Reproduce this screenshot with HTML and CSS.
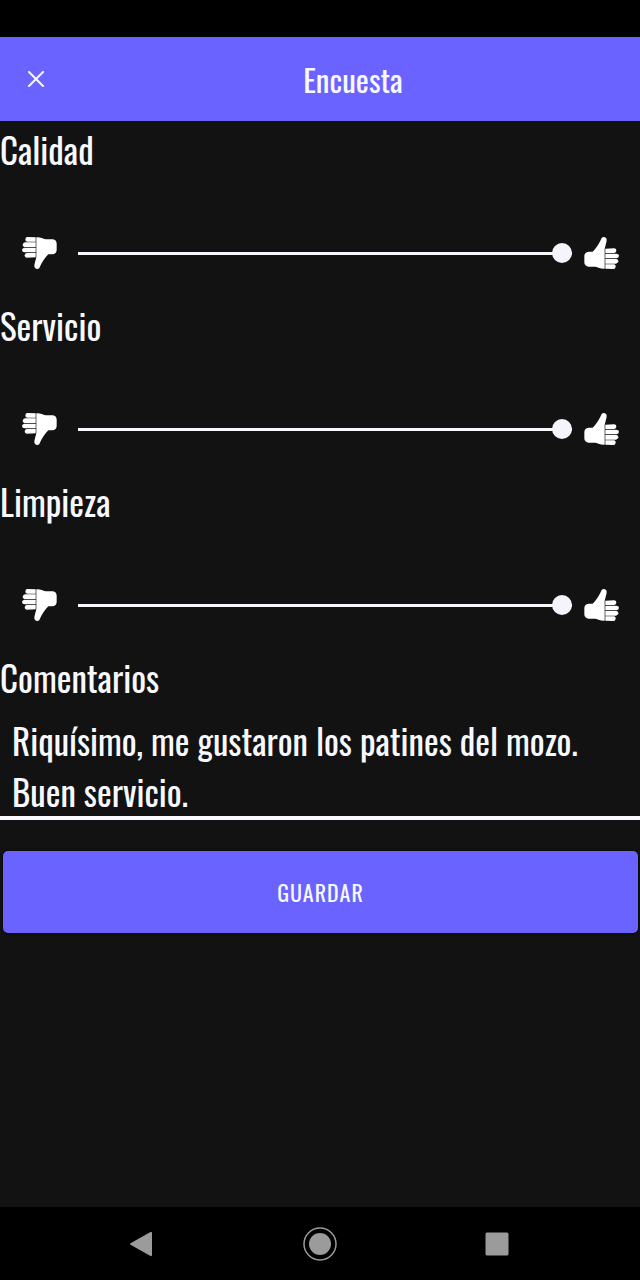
FILE: index.html
```html
<!DOCTYPE html>
<html lang="es">
<head>
<meta charset="utf-8">
<meta name="viewport" content="width=device-width, initial-scale=1">
<title>Encuesta</title>
<link rel="stylesheet" href="styles.css">
</head>
<body>
<svg class="sprite" aria-hidden="true">
  <symbol id="thumb" viewBox="0 0 108 102">
    <path d="M53 6C57 1 68 3 68 11C68 20 63 31 62 40V98C50 99 43 94 34 92H13C4 91 1 85 1 78V61C1 52 6 48 14 47H26C36 38 46 22 53 6Z"/>
    <path d="M64 38L91 37Q98 38 97 45Q96 50 91 51H64Z"/>
    <path d="M64 53H98Q105 54 105 60Q104 66 98 67H64Z"/>
    <path d="M64 69H97Q104 70 103 76Q102 82 96 83H64Z"/>
    <path d="M64 85H90Q96 86 95 92Q94 99 89 99L64 98Z"/>
  </symbol>
</svg>
<div class="screen">
  <div class="status"></div>
  <header class="bar">
    <button class="close" type="button" aria-label="Cerrar">
      <svg class="cross" viewBox="0 0 16 16"><path d="M1 1L15 15M15 1L1 15"/></svg>
    </button>
    <h1 class="title">Encuesta</h1>
  </header>
  <form class="survey">
    <div class="question">
      <label class="label" for="calidad">Calidad</label>
      <div class="rating">
        <svg class="thumb down"><use href="#thumb"/></svg>
        <input class="range" id="calidad" type="range" min="0" max="10" value="10">
        <svg class="thumb"><use href="#thumb"/></svg>
      </div>
    </div>
    <div class="question">
      <label class="label" for="servicio">Servicio</label>
      <div class="rating">
        <svg class="thumb down"><use href="#thumb"/></svg>
        <input class="range" id="servicio" type="range" min="0" max="10" value="10">
        <svg class="thumb"><use href="#thumb"/></svg>
      </div>
    </div>
    <div class="question">
      <label class="label" for="limpieza">Limpieza</label>
      <div class="rating">
        <svg class="thumb down"><use href="#thumb"/></svg>
        <input class="range" id="limpieza" type="range" min="0" max="10" value="10">
        <svg class="thumb"><use href="#thumb"/></svg>
      </div>
    </div>
    <label class="label" for="comentarios">Comentarios</label>
    <textarea class="comments" id="comentarios" rows="2">Riquísimo, me gustaron los patines del mozo.
Buen servicio.</textarea>
    <button class="save" type="button">GUARDAR</button>
  </form>
  <nav class="system">
    <button class="key" type="button" aria-label="Atrás">
      <svg class="glyph" viewBox="0 0 34 34"><path d="M4.500 16.200L24.500 5Q26 4.500 26 6V28Q26 29.500 24.500 29L4.500 17.800Q3.500 17 4.500 16.200Z"/></svg>
    </button>
    <button class="key" type="button" aria-label="Inicio">
      <svg class="glyph" viewBox="0 0 34 34"><circle class="ring" cx="17" cy="17" r="16"/><circle cx="17" cy="17" r="11"/></svg>
    </button>
    <button class="key" type="button" aria-label="Recientes">
      <svg class="glyph" viewBox="0 0 34 34"><rect x="5.500" y="5.500" width="23" height="23" rx="1.500"/></svg>
    </button>
  </nav>
</div>
</body>
</html>
```
FILE: styles.css
```css
* { box-sizing: border-box; }
body {
  margin: 0;
  background: #121212;
  color: #f8f8ff;
  font-family: Oswald, "Liberation Sans Narrow", "Arial Narrow", sans-serif;
}
button, input, textarea {
  margin: 0;
  padding: 0;
  border: 0;
  color: inherit;
  font-family: inherit;
}
.sprite { position: absolute; width: 0; height: 0; }
.screen { display: flex; flex-direction: column; min-height: 100vh; }
.status { height: 37px; background: #000; }
.bar {
  display: flex;
  align-items: center;
  height: 84px;
  background: #6a63ff;
}
.close {
  display: flex;
  justify-content: center;
  align-items: center;
  width: 66px;
  height: 84px;
  padding-left: 6px;
  background: none;
}
.cross {
  width: 16px;
  height: 16px;
  fill: none;
  stroke: #f8f8ff;
  stroke-width: 2;
  stroke-linecap: round;
}
.title {
  flex: 1;
  margin: 0;
  font-size: 31px;
  font-weight: 400;
  line-height: 48px;
  text-align: center;
}
.survey { display: flex; flex-direction: column; flex: 1; }
.question { display: flex; flex-direction: column; height: 176px; }
.label { font-size: 35px; line-height: 56px; }
.rating {
  display: flex;
  align-items: center;
  flex: 1;
  padding: 32px 20px 0 21px;
}
.thumb { flex: none; width: 36px; height: 34px; fill: #fff; }
.down { transform: rotate(180deg); }
.range {
  flex: 1;
  min-width: 0;
  height: 20px;
  margin: 0 12px 0 21px;
  appearance: none;
  background: linear-gradient(#f8f8ff, #f8f8ff) center / 100% 3px no-repeat;
}
.range::-webkit-slider-thumb {
  appearance: none;
  width: 20px;
  height: 20px;
  border-radius: 50%;
  background: #f4f4fc;
}
.comments {
  display: block;
  width: 100%;
  height: 115px;
  padding: 10px 12px 0;
  border-bottom: 4px solid #f8f8ff;
  background: none;
  font-size: 35px;
  line-height: 51px;
  resize: none;
  overflow: hidden;
}
.save {
  height: 82px;
  margin: 31px 2px 0 3px;
  border-radius: 5px;
  background: #6a63ff;
  font-size: 22px;
  letter-spacing: 1px;
  box-shadow: 0 0 3px #000;
}
.system {
  display: flex;
  justify-content: center;
  align-items: center;
  height: 73px;
  background: #000;
}
.key { display: flex; justify-content: center; width: 177px; background: none; }
.glyph { width: 34px; height: 34px; fill: #9b9b9b; }
.ring { fill: none; stroke: #9b9b9b; stroke-width: 1.5; }
```
